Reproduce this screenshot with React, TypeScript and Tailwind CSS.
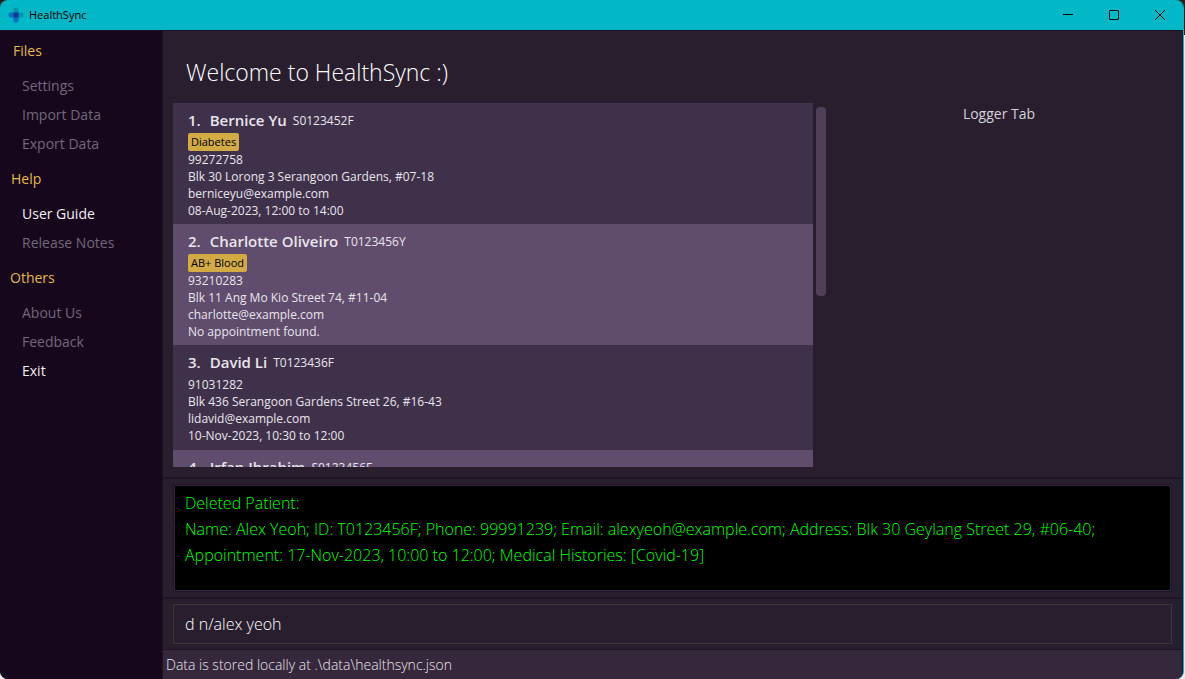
type Patient = {
  name: string;
  id: string;
  tags: string[];
  phone: string;
  address: string;
  email: string;
  appointment: string;
};

const patients: Patient[] = [
  {
    name: "Bernice Yu",
    id: "S0123452F",
    tags: ["Diabetes"],
    phone: "99272758",
    address: "Blk 30 Lorong 3 Serangoon Gardens, #07-18",
    email: "berniceyu@example.com",
    appointment: "08-Aug-2023, 12:00 to 14:00",
  },
  {
    name: "Charlotte Oliveiro",
    id: "T0123456Y",
    tags: ["AB+ Blood"],
    phone: "93210283",
    address: "Blk 11 Ang Mo Kio Street 74, #11-04",
    email: "charlotte@example.com",
    appointment: "No appointment found.",
  },
  {
    name: "David Li",
    id: "T0123436F",
    tags: [],
    phone: "91031282",
    address: "Blk 436 Serangoon Gardens Street 26, #16-43",
    email: "lidavid@example.com",
    appointment: "10-Nov-2023, 10:30 to 12:00",
  },
];

function Logo() {
  return (
    <svg width="16" height="16" viewBox="0 0 16 16" aria-hidden="true">
      <rect x="5.5" y="0.5" width="5" height="15" rx="2" fill="#0b8fae" />
      <rect x="1" y="5.5" width="14.5" height="5" rx="2" fill="#0b8fae" />
      <path d="M3 5.5h7.5V13a2.5 2.5 0 0 1-5 0v-2.5H3a2.5 2.5 0 0 1 0-5z" fill="#0e6cc4" />
      <rect x="5.5" y="5.5" width="5" height="5" rx="1" fill="#063f8e" />
    </svg>
  );
}

function TitleBar() {
  return (
    <header className="flex h-[30px] shrink-0 items-center justify-between bg-[#02b7c6] pl-2 text-black">
      <div className="flex items-center gap-[5px]">
        <Logo />
        <span className="text-[11px]">HealthSync</span>
      </div>
      <div className="flex h-full">
        <button aria-label="Minimize" className="flex w-[46px] items-center justify-center">
          <svg width="10" height="10" viewBox="0 0 10 10" stroke="currentColor">
            <path d="M0 4.5h10" />
          </svg>
        </button>
        <button aria-label="Maximize" className="flex w-[46px] items-center justify-center">
          <svg width="10" height="10" viewBox="0 0 10 10" fill="none" stroke="currentColor">
            <rect x="0.5" y="0.5" width="9" height="9" rx="0.5" />
          </svg>
        </button>
        <button aria-label="Close" className="flex w-[46px] items-center justify-center">
          <svg width="10" height="10" viewBox="0 0 10 10" stroke="currentColor">
            <path d="M0 0l10 10M10 0L0 10" />
          </svg>
        </button>
      </div>
    </header>
  );
}

const menus = [
  {
    title: "Files",
    inset: "pl-[13px]",
    items: [
      { label: "Settings", enabled: false },
      { label: "Import Data", enabled: false },
      { label: "Export Data", enabled: false },
    ],
  },
  {
    title: "Help",
    inset: "pl-[11px]",
    items: [
      { label: "User Guide", enabled: true },
      { label: "Release Notes", enabled: false },
    ],
  },
  {
    title: "Others",
    inset: "pl-[10px]",
    items: [
      { label: "About Us", enabled: false },
      { label: "Feedback", enabled: false },
      { label: "Exit", enabled: true },
    ],
  },
];

function Sidebar() {
  return (
    <nav className="w-[162px] shrink-0 bg-[#17071d] pt-px text-sm">
      {menus.map((menu) => (
        <section key={menu.title}>
          <h2 className={`h-[39px] pt-[9px] leading-5 font-medium text-[#e3b94a] ${menu.inset}`}>{menu.title}</h2>
          <ul className="pb-[2px]">
            {menu.items.map((item) => (
              <li key={item.label}>
                <button
                  disabled={!item.enabled}
                  className="flex h-[29px] items-center pl-[22px] text-[#f1eef2] disabled:text-[#71687a]"
                >
                  {item.label}
                </button>
              </li>
            ))}
          </ul>
        </section>
      ))}
    </nav>
  );
}

function PatientHeading({ index, name, id }: { index: number; name: string; id: string }) {
  return (
    <div className="flex h-[25px] items-center">
      <h3 className="flex gap-[9px] text-[15px] font-semibold">
        <span>{index}.</span>
        <span>{name}</span>
      </h3>
      <span className="ml-[6px] text-xs">{id}</span>
    </div>
  );
}

function PatientCard({ patient, index }: { patient: Patient; index: number }) {
  return (
    <li className="min-h-[105px] shrink-0 px-[15px] py-[5px] text-[#e9e5ec] odd:bg-[#40314b] even:bg-[#604c6c]">
      <PatientHeading index={index} name={patient.name} id={patient.id} />
      <div className="flex min-h-px gap-1">
        {patient.tags.map((tag) => (
          <span key={tag} className="h-[18px] rounded-xs bg-[#d3ab45] px-[3px] text-[11px] leading-[18px] text-black">
            {tag}
          </span>
        ))}
      </div>
      <div className="text-xs leading-[17px]">
        <p>{patient.phone}</p>
        <p>{patient.address}</p>
        <p>{patient.email}</p>
        <p>{patient.appointment}</p>
      </div>
    </li>
  );
}

export default function App() {
  return (
    <div className="h-screen bg-[linear-gradient(#222222_35px,#e6e6e6_35px)] pr-px font-['Open_Sans',sans-serif]">
      <div className="flex h-full flex-col overflow-hidden rounded-lg border-r border-[#02b7c6] bg-[#291e2e]">
        <TitleBar />
        <div className="flex min-h-0 flex-1 border-t border-r border-[#1d1322]">
          <Sidebar />
          <main className="flex min-w-0 flex-1 flex-col border-l border-[#1d1322]">
            <div className="flex min-h-0 flex-1 flex-col px-[10px] pb-[10px]">
              <h1 className="flex h-[72px] shrink-0 items-center pt-[11px] pl-[13px] text-[23px] font-light text-white">
                Welcome to HealthSync :)
              </h1>
              <div className="flex min-h-0 flex-1">
                <div className="flex min-w-0 flex-[653] gap-[3px]">
                  <ul className="flex min-w-0 flex-1 flex-col overflow-hidden">
                    {patients.map((patient, i) => (
                      <PatientCard key={patient.id} patient={patient} index={i + 1} />
                    ))}
                    <li className="shrink-0 bg-[#604c6c] px-[15px] py-[5px] text-[#e9e5ec]">
                      <PatientHeading index={4} name="Irfan Ibrahim" id="S0123456F" />
                    </li>
                  </ul>
                  <div className="mt-1 h-[189px] w-[10px] shrink-0 rounded-sm bg-[#503f59]" />
                </div>
                <h2 className="flex-[346] text-center text-sm leading-[22px] font-medium text-[#d6d1d9]">
                  Logger Tab
                </h2>
              </div>
            </div>
            <section className="border-t-2 border-[#1f1524] px-[10px] py-[5px]">
              <div className="border border-[#1f1524]">
                <output className="block h-[106px] border border-[#35273b] bg-black px-[10px] py-1 text-base leading-[26px] font-light text-[#00ff00]">
                  Deleted Patient:
                  <br />
                  Name: Alex Yeoh; ID: T0123456F; Phone: 99991239; Email: alexyeoh@example.com; Address: Blk 30 Geylang
                  Street 29, #06-40; Appointment: 17-Nov-2023, 10:00 to 12:00; Medical Histories: [Covid-19]
                </output>
              </div>
            </section>
            <section className="border-t-2 border-b border-[#1f1524] px-[10px] py-[5px]">
              <input
                aria-label="Command"
                defaultValue="d n/alex yeoh"
                className="block h-10 w-full border border-[#383838] bg-transparent px-[11px] text-base font-light text-white outline-none"
              />
            </section>
            <footer className="h-[29px] shrink-0 bg-[#36283c] pl-[3px] text-sm leading-[29px] font-light text-[#e9e5ec]">
              Data is stored locally at .\data\healthsync.json
            </footer>
          </main>
        </div>
      </div>
    </div>
  );
}
